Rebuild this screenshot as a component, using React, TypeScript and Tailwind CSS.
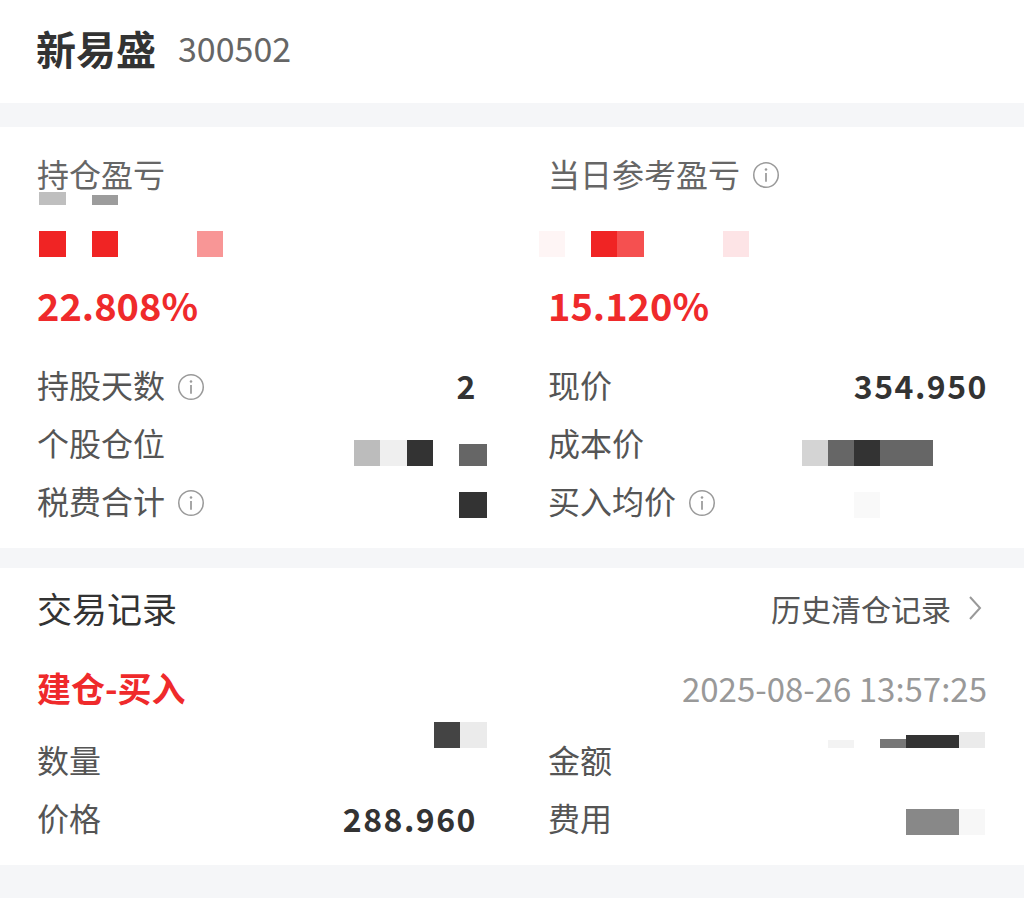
import React from "react";

type Block = { w: number; h?: number; c: string };

const RED = "#ef2a2b";

// redacted values are shown as pixel mosaics in the screenshot
const Mosaic: React.FC<{ blocks: Block[]; className?: string }> = ({ blocks, className }) => (
  <div className={`flex items-end ${className ?? ""}`}>
    {blocks.map((b, i) => (
      <div key={i} style={{ width: b.w, height: b.h ?? 26, background: b.c }} />
    ))}
  </div>
);

const InfoIcon: React.FC<{ size?: number }> = ({ size = 28 }) => (
  <svg width={size} height={size} viewBox="0 0 24 24" fill="none" className="shrink-0">
    <circle cx="12" cy="12" r="10.5" stroke="#9a9a9a" strokeWidth="1.3" />
    <circle cx="12" cy="7.3" r="1.1" fill="#9a9a9a" />
    <path d="M12 10.3v7.4" stroke="#9a9a9a" strokeWidth="1.5" />
  </svg>
);

type RowProps = {
  label: string;
  info?: boolean;
  value?: React.ReactNode;
};

const Row: React.FC<RowProps> = ({ label, info, value }) => (
  <div className="flex h-[58px] items-center justify-between">
    <div className="flex items-center gap-[12px] text-[32px] leading-none text-[#555]">
      <span className="pb-[6px]">{label}</span>
      {info && <InfoIcon />}
    </div>
    {value}
  </div>
);

const Val: React.FC<{ children: React.ReactNode }> = ({ children }) => (
  <span className="pb-[4px] text-[32px] font-bold leading-none tracking-[1.5px] text-[#333]">{children}</span>
);

export default function App() {
  return (
    <div className="min-h-[898px] w-[1024px] bg-[#f5f6f8] font-['Noto_Sans_CJK_SC','Noto_Sans',sans-serif]">
      {/* header */}
      <div className="flex h-[103px] items-center gap-[22px] bg-white px-[36px] pb-[8px]">
        <span className="text-[40px] font-bold leading-none text-[#333]">新易盛</span>
        <span className="text-[34px] leading-none text-[#666]">300502</span>
      </div>

      {/* position summary */}
      <div className="mt-[24px] grid grid-cols-[440px_440px] gap-x-[71px] bg-white px-[37px] pb-[16px] pt-[31px]">
        <div className="flex flex-col">
          <div className="flex h-[34px] items-center pb-[5px] text-[32px] leading-none text-[#666]">持仓盈亏</div>
          <Mosaic
            className="h-[13px] pl-[2px]"
            blocks={[
              { w: 27, h: 13, c: "#bfbfbf" },
              { w: 26, h: 0, c: "transparent" },
              { w: 26, h: 10, c: "#9c9c9c" },
            ]}
          />
          <Mosaic
            className="mt-[26px] pl-[2px]"
            blocks={[
              { w: 27, c: "#f02424" },
              { w: 26, c: "transparent" },
              { w: 26, c: "#f02424" },
              { w: 79, c: "transparent" },
              { w: 26, c: "#f89696" },
            ]}
          />
          <div className="mt-[28px] flex h-[44px] items-center pb-[5px] text-[38px] font-bold leading-none" style={{ color: RED }}>
            22.808%
          </div>
          <div className="mt-[29px]">
            <Row label="持股天数" info value={<Val>2</Val>} />
            <Row
              label="个股仓位"
              value={
                <Mosaic
                  className="-mr-[10px] mt-[16px]"
                  blocks={[
                    { w: 26, c: "#bcbcbc" },
                    { w: 27, c: "#efefef" },
                    { w: 26, c: "#333" },
                    { w: 26, c: "transparent" },
                    { w: 28, h: 22, c: "#666" },
                  ]}
                />
              }
            />
            <Row
              label="税费合计"
              info
              value={<Mosaic className="-mr-[10px] mt-[4px]" blocks={[{ w: 28, c: "#333" }]} />}
            />
          </div>
        </div>

        <div className="flex flex-col">
          <div className="flex h-[34px] items-center gap-[12px] text-[32px] leading-none text-[#666]">
            <span className="pb-[5px]">当日参考盈亏</span>
            <InfoIcon size={28} />
          </div>
          <div className="h-[13px]" />
          <Mosaic
            className="-ml-[9px] mt-[26px]"
            blocks={[
              { w: 26, c: "#fef5f5" },
              { w: 26, c: "transparent" },
              { w: 26, c: "#f02424" },
              { w: 27, c: "#f55050" },
              { w: 79, c: "transparent" },
              { w: 26, c: "#fde4e6" },
            ]}
          />
          <div className="mt-[28px] flex h-[44px] items-center pb-[5px] text-[38px] font-bold leading-none" style={{ color: RED }}>
            15.120%
          </div>
          <div className="mt-[29px]">
            <Row label="现价" value={<Val>354.950</Val>} />
            <Row
              label="成本价"
              value={
                <Mosaic
                  className="mr-[55px] mt-[16px]"
                  blocks={[
                    { w: 26, c: "#d4d4d4" },
                    { w: 26, c: "#666" },
                    { w: 26, c: "#333" },
                    { w: 26, c: "#666" },
                    { w: 27, c: "#666" },
                  ]}
                />
              }
            />
            <Row
              label="买入均价"
              info
              value={<Mosaic className="mr-[108px] mt-[4px]" blocks={[{ w: 26, c: "#f9f9f9" }]} />}
            />
          </div>
        </div>
      </div>

      {/* trade records */}
      <div className="mt-[20px] bg-white px-[37px] pb-[16px] pt-[20px]">
        <div className="flex h-[44px] items-center justify-between">
          <span className="pb-[6px] text-[35px] leading-none text-[#333]">交易记录</span>
          <div className="flex items-center gap-[16px] text-[30px] leading-none text-[#555]">
            <span className="pb-[5px]">历史清仓记录</span>
            <svg width="16" height="26" viewBox="0 0 16 26" fill="none" className="mr-[4px] mb-[4px]">
              <path d="M3 2l10 11L3 24" stroke="#999" strokeWidth="2" />
            </svg>
          </div>
        </div>
        <div className="mt-[36px] flex h-[44px] items-center justify-between">
          <span className="pb-[4px] text-[34px] font-semibold leading-none" style={{ color: RED }}>
            建仓-买入
          </span>
          <span className="pb-[4px] text-[33px] leading-none text-[#999]">2025-08-26 13:57:25</span>
        </div>
        <div className="mt-[21px] grid grid-cols-[440px_440px] gap-x-[71px]">
          <div>
            <Row
              label="数量"
              value={
                <Mosaic
                  className="-mr-[10px] -mt-[11px] self-start"
                  blocks={[
                    { w: 26, c: "#444" },
                    { w: 27, c: "#ebebeb" },
                  ]}
                />
              }
            />
            <Row label="价格" value={<Val>288.960</Val>} />
          </div>
          <div>
            <Row
              label="金额"
              value={
                <Mosaic
                  className="mr-[3px] -mt-[1px] self-start"
                  blocks={[
                    { w: 26, h: 8, c: "#f3f3f3" },
                    { w: 26, h: 0, c: "transparent" },
                    { w: 26, h: 9, c: "#777" },
                    { w: 53, h: 13, c: "#333" },
                    { w: 26, h: 16, c: "#ebebeb" },
                  ]}
                />
              }
            />
            <Row
              label="费用"
              value={
                <Mosaic
                  className="mr-[3px] mt-[4px]"
                  blocks={[
                    { w: 53, c: "#888" },
                    { w: 26, c: "#f7f7f7" },
                  ]}
                />
              }
            />
          </div>
        </div>
      </div>
    </div>
  );
}
